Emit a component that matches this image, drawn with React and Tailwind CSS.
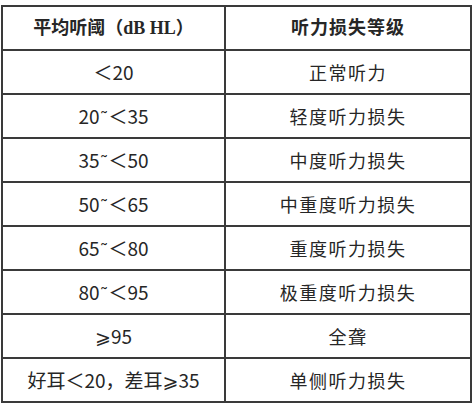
const rows = [
  ["＜20", "正常听力"],
  ["20˜＜35", "轻度听力损失"],
  ["35˜＜50", "中度听力损失"],
  ["50˜＜65", "中重度听力损失"],
  ["65˜＜80", "重度听力损失"],
  ["80˜＜95", "极重度听力损失"],
  ["⩾95", "全聋"],
  ["好耳＜20，差耳⩾35", "单侧听力损失"],
];

function Cell1({ text }) {
  const parts = text.split("˜");
  if (parts.length === 1) return <>{text}</>;
  return (
    <>
      {parts[0]}
      <span className="relative top-[1px] text-[18px]" style={{ fontFamily: '"DejaVu Sans", sans-serif' }}>˜</span>
      {parts[1]}
    </>
  );
}

export default function App() {
  return (
    <div className="w-[475px] h-[404px] bg-white pt-[5px] pl-[1px]">
      <table className="border-collapse text-[#262626]">
        <tbody>
          <tr className="h-[44px]" style={{ fontFamily: '"Liberation Serif", "Noto Sans CJK SC", serif' }}>
            <td className="w-[223px] border-2 border-[#3a3a3a] text-center font-bold p-0 text-[18px]">平均听阈（dB HL）</td>
            <td className="w-[246px] border-2 border-[#3a3a3a] text-center font-bold p-0 text-[18px] tracking-[1px]">听力损失等级</td>
          </tr>
          {rows.map(([a, b], i) => (
            <tr key={i} className="h-[44px]" style={{ fontFamily: '"Noto Sans CJK SC", "DejaVu Sans", sans-serif' }}>
              <td className="border-2 border-[#3a3a3a] text-center p-0 text-[19px]"><Cell1 text={a} /></td>
              <td className="border-2 border-[#3a3a3a] text-center p-0 text-[18px] tracking-[1.5px]">{b}</td>
            </tr>
          ))}
        </tbody>
      </table>
    </div>
  );
}
